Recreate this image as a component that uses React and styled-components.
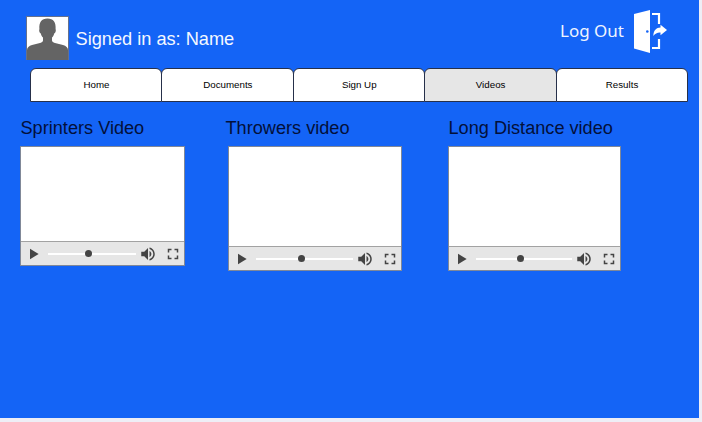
import React from "react";
import styled, { createGlobalStyle } from "styled-components";

const GlobalStyle = createGlobalStyle`
  * { box-sizing: border-box; }
  body { margin: 0; background: #eeeef6; overflow: hidden; }
`;

const Page = styled.main`
  width: 699px;
  height: 418px;
  background: #1464f6;
  font-family: "Liberation Sans", Arial, sans-serif;
`;

const Header = styled.header`
  display: flex;
  align-items: flex-start;
  height: 68px;
  padding: 0 32px 0 26px;
`;

const Avatar = styled.svg`
  width: 43px;
  height: 44px;
  margin-top: 16px;
  flex: none;
`;

const UserName = styled.div`
  margin: 28px 0 0 6.5px;
  font-size: 18.2px;
  line-height: 22px;
  color: #f4f8ff;
  white-space: nowrap;
`;

const LogOut = styled.a`
  display: flex;
  align-items: flex-start;
  margin-left: auto;
  color: #eef4ff;
`;

const LogOutLabel = styled.span`
  margin-top: 19px;
  font-family: "Noto Sans", "Open Sans", sans-serif;
  font-size: 17px;
  line-height: 24px;
  white-space: nowrap;
`;

const Door = styled.svg`
  width: 34px;
  height: 44px;
  margin: 9px 0 0 9px;
`;

const Tabs = styled.nav`
  display: grid;
  grid-template-columns: repeat(5, 131.4px);
  height: 34px;
  margin-left: 30px;
`;

const Tab = styled.a`
  display: flex;
  align-items: center;
  justify-content: center;
  margin-right: -1px;
  padding: 0 0 1px 0.5px;
  border: 1px solid #26304a;
  border-radius: 6px 6px 0 0;
  background: ${(p) => (p.$active ? "#e6e6e6" : "#fff")};
  font-size: 9.75px;
  line-height: 12px;
  color: #000;
`;

const Videos = styled.section`
  display: grid;
  grid-template-columns: 205px 223px 200px;
  align-items: start;
  padding: 15px 0 0 20px;
`;

const Title = styled.h2`
  margin: 0 0 7px 0.5px;
  font-size: 18.15px;
  font-weight: 400;
  line-height: 22px;
  color: #03103a;
  white-space: nowrap;
`;

const Player = styled.div`
  display: flex;
  flex-direction: column;
  width: ${(p) => p.$width}px;
  height: ${(p) => p.$height}px;
  margin-left: ${(p) => p.$offset}px;
  border: 1px solid #808898;
  background: #fff;
`;

const Screen = styled.div`
  flex: 1;
`;

const Controls = styled.div`
  display: flex;
  align-items: center;
  height: 24px;
  padding: 0 2px 0 3px;
  border-top: 1px solid #a2a2a2;
  background: #e6e6e6;
`;

const Icon = styled.svg`
  width: ${(p) => p.$size}px;
  height: ${(p) => p.$size}px;
  flex: none;
  fill: #444;
`;

const Track = styled.div`
  position: relative;
  flex: 1;
  height: 2px;
  margin: 0 3px 0 6px;
  background: #fff;
`;

const Knob = styled.span`
  position: absolute;
  top: -2.5px;
  left: ${(p) => p.$at}%;
  width: 7px;
  height: 7px;
  margin-left: -3.5px;
  border-radius: 50%;
  background: #444;
`;

const Gap = styled.span`
  width: 7px;
`;

const tabs = ["Home", "Documents", "Sign Up", "Videos", "Results"];

const videos = [
  { title: "Sprinters Video", offset: 0, width: 165, height: 120, at: 45.8 },
  { title: "Throwers video", offset: 3, width: 174, height: 125, at: 46.4 },
  { title: "Long Distance video", offset: 0, width: 173, height: 125, at: 46.8 },
];

function Video({ title, offset, width, height, at }) {
  return (
    <article>
      <Title>{title}</Title>
      <Player $width={width} $height={height} $offset={offset}>
        <Screen />
        <Controls>
          <Icon $size={18} viewBox="0 0 24 24"><path d="M8 5v14l11.500-7z" /></Icon>
          <Track><Knob $at={at} /></Track>
          <Icon $size={18} viewBox="0 0 24 24">
            <path d="M3 9v6h4l5 5V4L7 9H3zm13.5 3c0-1.77-1.02-3.29-2.5-4.03v8.05c1.48-.73 2.5-2.25 2.5-4.02zM14 3.23v2.06c2.89.86 5 3.54 5 6.71s-2.11 5.85-5 6.71v2.06c4.01-.91 7-4.49 7-8.77s-2.99-7.86-7-8.77z" />
          </Icon>
          <Gap />
          <Icon $size={18} viewBox="0 0 24 24">
            <path d="M7 14H5v5h5v-2H7v-3zm-2-4h2V7h3V5H5v5zm12 7h-3v2h5v-5h-2v3zM14 5v2h3v3h2V5h-5z" />
          </Icon>
        </Controls>
      </Player>
    </article>
  );
}

export default function App() {
  return (
    <>
      <GlobalStyle />
      <Page>
        <Header>
          <Avatar viewBox="0 0 43 44">
            <rect x=".5" y=".5" width="42" height="43" fill="#fff" stroke="#66718c" />
            <path
              fill="#646464"
              d="M1 44V34C1 31.500 3 30 6 29L13 27.300C16 26.500 17 25.800 17 24.500V21.500C15.800 20.500 15.200 19.200 14.800 17.500C13.300 17 12.800 14.300 13.400 13C12.900 6.500 15.500 2.500 21.500 2.500S30.100 6.500 29.600 13C30.200 14.300 29.700 17 28.200 17.500C27.800 19.200 27.200 20.500 26 21.500V24.500C26 25.800 27 26.500 30 27.300L37 29C40 30 42 31.500 42 34V44Z"
            />
          </Avatar>
          <UserName>Signed in as: Name</UserName>
          <LogOut>
            <LogOutLabel>Log Out</LogOutLabel>
            <Door viewBox="0 0 34 44">
              <path fill="#fff" d="M1 5 17 1v43L1 39.500z" />
              <circle cx="14.300" cy="22.500" r="1.300" fill="#1464f6" />
              <path fill="none" stroke="#fff" strokeWidth="2.200" d="M19 5h7v10M26 30v9H19" />
              <path fill="#fff" d="M20.300 27c.2-5.500 3-8.300 7.200-8.400V15.800L34 21l-6.500 5.300v-2.800c-3-.2-5.500 1-7.200 3.500z" />
            </Door>
          </LogOut>
        </Header>
        <Tabs>
          {tabs.map((label) => (
            <Tab key={label} $active={label === "Videos"}>{label}</Tab>
          ))}
        </Tabs>
        <Videos>
          {videos.map((video) => (
            <Video key={video.title} {...video} />
          ))}
        </Videos>
      </Page>
    </>
  );
}
